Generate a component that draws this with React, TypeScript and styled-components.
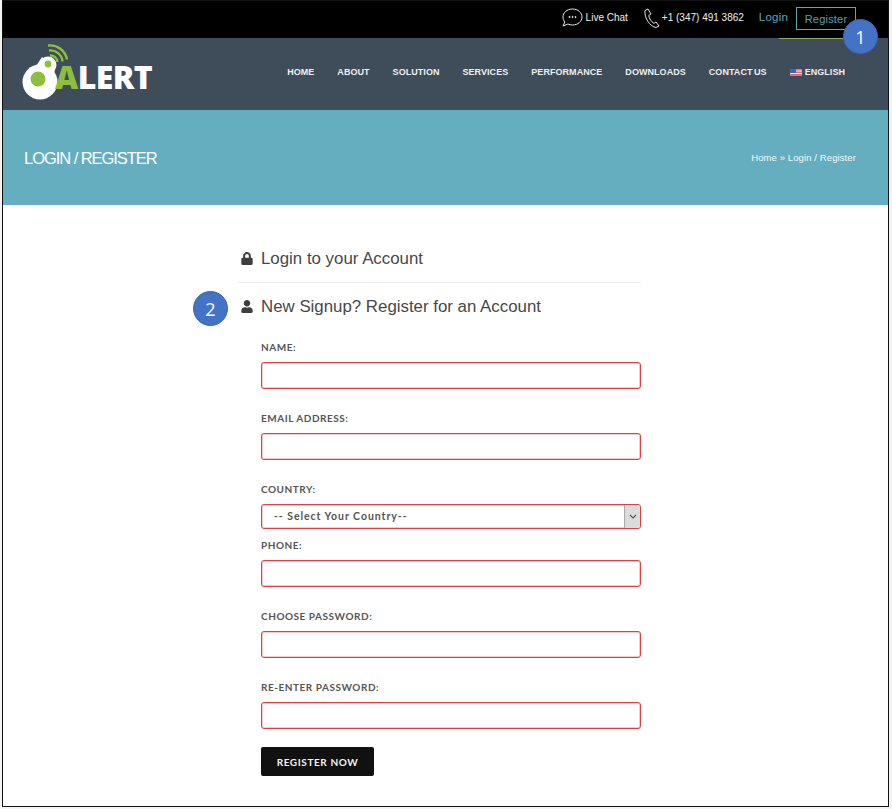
import React from "react";
import styled, { createGlobalStyle } from "styled-components";
import { FaLock, FaUser } from "react-icons/fa";

const Global = createGlobalStyle`
  html, body { margin: 0; padding: 0; background: #fff; }
  body { font-family: "Liberation Sans", Arial, sans-serif; width: 892px; height: 809px; overflow: hidden; }
  * { box-sizing: border-box; }
`;

const Page = styled.div`
  width: 892px;
  height: 809px;
  padding: 0 2px 2px 2px;
  background: #f4f4f4;
`;
const Frame = styled.div`
  position: relative;
  width: 887px;
  height: 807px;
  border: 1px solid #111;
  background: #fff;
`;
const TopBar = styled.div`
  height: 37px;
  background: #000;
  display: flex;
  align-items: center;
  justify-content: flex-end;
  padding: 0 32px 4px 0;
  color: #f0f0f0;
  font-size: 10px;
`;
const TopItem = styled.span`
  display: inline-flex;
  align-items: center;
  gap: 2px;
  margin-right: 15px;
  font-size: 10px;
  svg { flex: none; }
`;
const LoginLink = styled.a`
  color: #5aa6bb;
  font-size: 11.5px;
  margin-right: 8px;
  margin-top: -2px;
  letter-spacing: 0.2px;
`;
const RegisterBox = styled.a`
  display: flex;
  align-items: center;
  justify-content: center;
  width: 60px;
  height: 23px;
  border: 1px solid #5fa7a9;
  color: #5f9fa8;
  font-size: 11px;
  letter-spacing: 0.2px;
  margin-top: 1px;
  padding-top: 1px;
`;
const Underline = styled.div`
  position: absolute;
  left: 776px;
  top: 37px;
  width: 70px;
  height: 1px;
  background: #8fae5d;
`;
const NavBar = styled.div`
  height: 72px;
  background: #3f4c59;
  display: flex;
  align-items: flex-start;
  justify-content: space-between;
  padding: 0 43px 0 19px;
`;
const LogoWrap = styled.div`
  position: relative;
  width: 136px;
  height: 60px;
  margin-top: 5px;
`;
const LogoText = styled.span`
  position: absolute;
  left: 33px;
  top: 16px;
  font-family: "Open Sans", "Liberation Sans", sans-serif;
  font-weight: 800;
  font-size: 32px;
  line-height: 36px;
  letter-spacing: -0.6px;
  color: #fff;
`;
const LogoA = styled.span`
  color: #8dbf3e;
`;
const Menu = styled.nav`
  display: flex;
  align-items: center;
  gap: 23px;
  height: 68px;
`;
const MenuItem = styled.a`
  display: inline-flex;
  align-items: center;
  gap: 3px;
  color: #eef0f2;
  font-size: 9px;
  font-weight: 700;
  letter-spacing: 0.05px;
  word-spacing: -1px;
  white-space: nowrap;
`;
const TitleBand = styled.div`
  height: 95px;
  background: #65aebf;
  display: flex;
  align-items: center;
  justify-content: space-between;
  padding: 0 32px 0 21px;
`;
const PageTitle = styled.h1`
  margin: 2px 0 0;
  font-size: 16.5px;
  font-weight: 400;
  letter-spacing: -1.05px;
  color: #fff;
`;
const Crumbs = styled.div`
  font-size: 9.5px;
  color: #f4f8f9;
  letter-spacing: 0.1px;
`;
const Content = styled.main`
  width: 403px;
  margin-left: 235px;
  padding-top: 42px;
`;
const Heading = styled.div<{ $rule?: boolean }>`
  display: flex;
  align-items: center;
  height: ${p => (p.$rule ? "36px" : "auto")};
  padding-bottom: ${p => (p.$rule ? "12px" : "0")};
  border-bottom: ${p => (p.$rule ? "1px solid #eeeeee" : "none")};
  margin-bottom: ${p => (p.$rule ? "14px" : "25px")};
  font-size: 16.85px;
  line-height: 19px;
  color: #484848;
  svg { width: 12px; height: 13px; margin: 0 8px 0 3px; flex: none; fill: #3e3e3e; }
`;
const Form = styled.div`
  margin-left: 23px;
  width: 380px;
`;
const Label = styled.label`
  display: block;
  font-family: "Lato", "Liberation Sans", sans-serif;
  font-size: 10px;
  line-height: 12px;
  font-weight: 700;
  letter-spacing: 0.53px;
  color: #555;
  margin-bottom: 9px;
`;
const Input = styled.div`
  width: 380px;
  height: 27px;
  background: #fff;
  border: 1px solid #dd3f45;
  box-shadow: inset 0 0 0 1px rgba(232, 102, 106, 0.35);
  border-radius: 3px;
  margin-bottom: 23px;
`;
const SelectBox = styled.div`
  width: 380px;
  height: 25px;
  display: flex;
  align-items: stretch;
  justify-content: space-between;
  background: #fff;
  border: 1px solid #dd3f45;
  box-shadow: inset 0 0 0 1px rgba(232, 102, 106, 0.35);
  border-radius: 3px;
  margin-bottom: 10px;
  overflow: hidden;
`;
const SelectText = styled.span`
  font-family: "Lato", "Liberation Sans", sans-serif;
  font-size: 10.5px;
  font-weight: 700;
  letter-spacing: 0.95px;
  color: #555;
  line-height: 23px;
  padding-left: 12px;
`;
const SelectArrow = styled.span`
  width: 16px;
  display: flex;
  align-items: center;
  justify-content: center;
  background: #dcdcdc;
  border-left: 1px solid #aaa;
`;
const Button = styled.button`
  display: block;
  width: 113px;
  height: 29px;
  margin-top: -5px;
  background: #111;
  color: #f2f2f2;
  border: 0;
  border-radius: 2px;
  font-family: "Lato", "Liberation Sans", sans-serif;
  font-size: 10px;
  font-weight: 700;
  letter-spacing: 0.6px;
`;
const Badge = styled.div<{ $x: number; $y: number }>`
  position: absolute;
  left: ${p => p.$x}px;
  top: ${p => p.$y}px;
  width: 35px;
  height: 35px;
  border-radius: 50%;
  background: #4472c4;
  border: 1px solid #3c66b0;
  color: #fff;
  display: flex;
  align-items: center;
  justify-content: center;
  font-family: "Open Sans", "Liberation Sans", sans-serif;
  font-size: 18px;
`;

const fields = ["NAME:", "EMAIL ADDRESS:"];
const fields2 = ["PHONE:", "CHOOSE PASSWORD:", "RE-ENTER PASSWORD:"];
const menu = ["HOME", "ABOUT", "SOLUTION", "SERVICES", "PERFORMANCE", "DOWNLOADS", "CONTACT US"];

const Logo = () => (
  <LogoWrap>
    <svg width="136" height="60" viewBox="0 0 136 60">
      <g stroke="#8dbf3e" strokeWidth="2.400" fill="none">
        <path d="M28 12.500a7 7 0 0 1 7.500 6.500" />
        <path d="M27 7.500a12 12 0 0 1 13.500 11" />
        <path d="M26 2.500a17 17 0 0 1 19 14" />
      </g>
      <circle cx="18" cy="39" r="17.500" fill="#fff" />
      <circle cx="26" cy="22" r="8.500" fill="#fff" />
      <path d="M14 23 L20 14 L33 26 L32 32 Z" fill="#fff" />
      <circle cx="26" cy="21" r="3.400" fill="#8dbf3e" />
      <circle cx="16" cy="36" r="7.500" fill="#8dbf3e" />
    </svg>
    <LogoText><LogoA>A</LogoA>LERT</LogoText>
  </LogoWrap>
);

export default function App() {
  return (
    <Page>
      <Global />
      <Frame>
        <TopBar>
          <TopItem>
            <svg width="24" height="22" viewBox="0 0 24 22" fill="none" stroke="#e8e8e8" strokeWidth="1">
              <path d="M12.500 2C18 2 22 5.600 22 10s-4 8-9.500 8c-1.800 0-3.200-.3-4.600-1L3 19l1.800-4C3.600 13.600 3 11.900 3 10c0-4.400 4-8 9.500-8z" />
              <circle cx="9.500" cy="10" r=".6" fill="#e8e8e8" />
              <circle cx="12.500" cy="10" r=".6" fill="#e8e8e8" />
              <circle cx="15.500" cy="10" r=".6" fill="#e8e8e8" />
            </svg>
            Live Chat
          </TopItem>
          <TopItem>
            <svg width="17" height="20" viewBox="0 0 17 20" fill="none" stroke="#e8e8e8" strokeWidth="1">
              <path d="M2 2.500 5 1l3 5-2.200 1.500c.4 3 2.200 6 5 7.800L13 14l3 4-3 1.500C7 18.500 1 10 2 2.500z" />
            </svg>
            +1 (347) 491 3862
          </TopItem>
          <LoginLink>Login</LoginLink>
          <RegisterBox>Register</RegisterBox>
        </TopBar>
        <Underline />
        <NavBar>
          <Logo />
          <Menu>
            {menu.map(m => <MenuItem key={m}>{m}</MenuItem>)}
            <MenuItem>
              <svg width="12" height="7" viewBox="0 0 12 7">
                <rect width="12" height="7" fill="#d9727f" />
                <rect y="1.500" width="12" height="1" fill="#f3e6e6" />
                <rect y="4" width="12" height="1" fill="#f3e6e6" />
                <rect width="6" height="4" fill="#4a62a8" />
              </svg>
              ENGLISH
            </MenuItem>
          </Menu>
        </NavBar>
        <TitleBand>
          <PageTitle>LOGIN / REGISTER</PageTitle>
          <Crumbs>Home » Login / Register</Crumbs>
        </TitleBand>
        <Content>
          <Heading $rule>
            <FaLock />
            Login to your Account
          </Heading>
          <Heading>
            <FaUser />
            New Signup? Register for an Account
          </Heading>
          <Form>
            {fields.map(f => (
              <React.Fragment key={f}>
                <Label>{f}</Label>
                <Input />
              </React.Fragment>
            ))}
            <Label>COUNTRY:</Label>
            <SelectBox>
              <SelectText>-- Select Your Country--</SelectText>
              <SelectArrow>
                <svg width="8" height="5" viewBox="0 0 8 5" fill="none" stroke="#555" strokeWidth="1.200"><path d="M1 1l3 3 3-3" /></svg>
              </SelectArrow>
            </SelectBox>
            {fields2.map(f => (
              <React.Fragment key={f}>
                <Label>{f}</Label>
                <Input />
              </React.Fragment>
            ))}
            <Button>REGISTER NOW</Button>
          </Form>
        </Content>
        <Badge $x={840} $y={18}>1</Badge>
        <Badge $x={190} $y={290}>2</Badge>
      </Frame>
    </Page>
  );
}
